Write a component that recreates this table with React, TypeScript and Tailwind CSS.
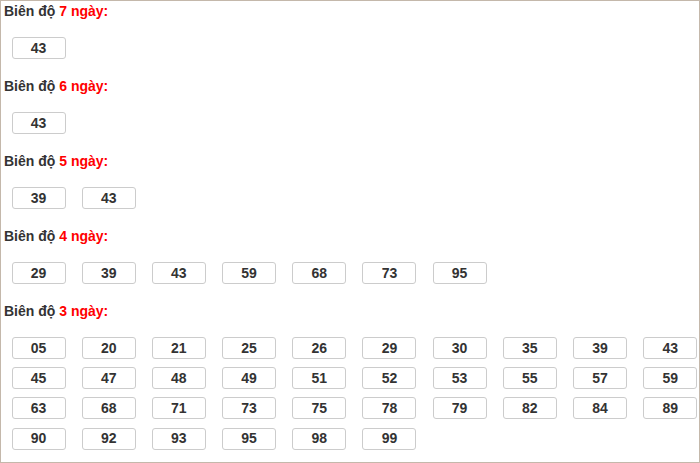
type Section = {
  days: number;
  numbers: string[];
};

const sections: Section[] = [
  { days: 7, numbers: ["43"] },
  { days: 6, numbers: ["43"] },
  { days: 5, numbers: ["39", "43"] },
  { days: 4, numbers: ["29", "39", "43", "59", "68", "73", "95"] },
  {
    days: 3,
    numbers: [
      "05", "20", "21", "25", "26", "29", "30", "35", "39", "43",
      "45", "47", "48", "49", "51", "52", "53", "55", "57", "59",
      "63", "68", "71", "73", "75", "78", "79", "82", "84", "89",
      "90", "92", "93", "95", "98", "99",
    ],
  },
];

export default function App() {
  return (
    <div className="w-[700px] h-[463px] bg-white border border-[#c4b8ab] overflow-hidden font-['Liberation_Sans',Arial,sans-serif] text-[14px] font-bold text-[#333]">
      {sections.map((s) => (
        <div key={s.days} className="mb-[17px]">
          <div className="h-[21px] leading-[21px] pl-[3px]">
            Biên độ <span className="text-[#f00]">{s.days} ngày:</span>
          </div>
          <div className="mt-[15px] ml-[10.5px] grid grid-cols-[repeat(10,54px)] gap-x-[16.2px] gap-y-[8.2px]">
            {s.numbers.map((n, i) => (
              <div
                key={i}
                className="h-[22px] flex items-center justify-center border border-[#ccc] rounded-[3px]"
              >
                {n}
              </div>
            ))}
          </div>
        </div>
      ))}
    </div>
  );
}
